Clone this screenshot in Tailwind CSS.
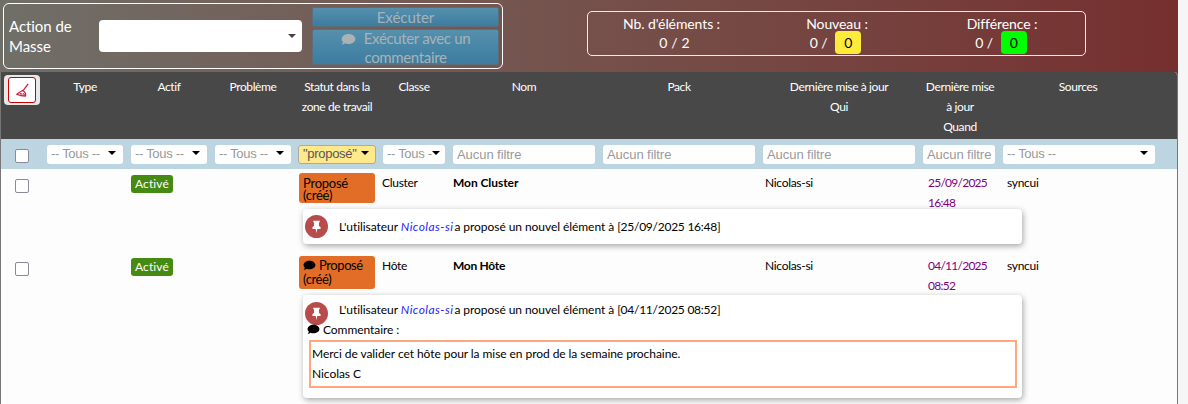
<!DOCTYPE html>
<html lang="fr">
<head>
    <meta charset="UTF-8">
    <title>Zone de travail</title>
    <script src="https://cdn.jsdelivr.net/npm/@tailwindcss/browser@4"></script>
</head>
<body class="bg-[#f6f6f6] h-[404px] w-[1188px] overflow-hidden font-['Lato','Liberation_Sans',sans-serif] text-black text-[12px] tracking-[-0.06px]">
    <div class="w-[1178px] bg-[#752f2f]">
        <!-- top bar -->
        <div class="h-[72px] bg-gradient-to-r from-[#6f6f68] to-[#752f2f] flex items-start">
            <div class="ml-[3px] mt-[3px] w-[500px] h-[66px] border border-white rounded-[6px] flex items-center text-white text-[15px]">
                <div class="w-[95px] pl-[5px] leading-[20px]">Action de Masse</div>
                <div class="w-[203px] h-[32px] bg-white rounded-[4px] flex items-center justify-end pr-[6px]">
                    <span class="border-x-[4px] border-x-transparent border-t-[4px] border-t-[#444]"></span>
                </div>
                <div class="ml-[10px] w-[187px] flex flex-col gap-[2px] text-[#a8b3b6] text-[15px] text-center">
                    <div class="h-[20px] leading-[19px] bg-gradient-to-b from-[#5590ad] to-[#3d7ca0] rounded-[2px] border border-[#5b6e7a]">Exécuter</div>
                    <div class="h-[36px] bg-gradient-to-b from-[#5590ad] to-[#3d7ca0] rounded-[2px] border border-[#5b6e7a] px-[15px]">
                        <div class="-mt-[1px] leading-[19px] tracking-[-0.35px]">
                            <svg viewBox="0 0 24 20" class="inline w-[15px] h-[13px] mr-[8px] -mt-[2px]" fill="#a8b3b6"><path d="M12 1C5.900 1 1 4.600 1 9c0 1.900.9 3.600 2.400 5-.5 1.600-1.500 3-2.400 4 2 0 4.100-.9 5.500-2 1.700.6 3.500 1 5.500 1 6.100 0 11-3.600 11-8s-4.900-8-11-8z"/></svg>Exécuter avec un commentaire
                        </div>
                    </div>
                </div>
            </div>
            <div class="ml-[84px] mt-[11px] w-[499px] h-[45px] border border-white/90 rounded-[5px] grid grid-cols-[167px_164px_166px] text-white text-[14px] text-center leading-[19px] tracking-[-0.1px]">
                <div class="pt-[2px]">
                    <div>Nb. d'éléments :</div>
                    <div class="leading-[23px] -mt-[2px] pl-[6px] tracking-[0.2px]">0 / 2</div>
                </div>
                <div class="pt-[2px]">
                    <div>Nouveau :</div>
                    <div class="flex justify-center items-center gap-[8px] -mt-[2px] pr-[3px]">0 / <span class="w-[26px] h-[23px] leading-[23px] bg-[#ffeb3b] text-black rounded-[4px]">0</span></div>
                </div>
                <div class="pt-[2px]">
                    <div>Différence :</div>
                    <div class="flex justify-center items-center gap-[8px] -mt-[2px] pr-[2px]">0 / <span class="w-[26px] h-[23px] leading-[23px] bg-[#00ff00] text-black rounded-[4px]">0</span></div>
                </div>
            </div>
        </div>

        <!-- table -->
        <div class="border-x border-[#777] rounded-tr-[4px] overflow-hidden bg-[#fdfdfd] h-[332px]">
        <table class="table-fixed w-[1176px] border-collapse">
            <colgroup>
                <col class="w-[42px]"><col class="w-[84px]"><col class="w-[84px]"><col class="w-[84px]"><col class="w-[84px]">
                <col class="w-[70px]"><col class="w-[150px]"><col class="w-[160px]"><col class="w-[160px]"><col class="w-[80px]"><col class="w-[178px]">
            </colgroup>
            <thead>
                <tr class="bg-[#484848] text-white h-[67px] align-top text-center leading-[20px] tracking-[-0.4px]">
                    <th class="font-normal pt-[5px]">
                        <div class="ml-[3px] -mt-[2px] w-[36px] h-[30px] bg-[#e8e8e8] rounded-[4px] flex items-center justify-center">
                            <div class="w-[28px] h-[26px] bg-white border border-[#cc0000] rounded-[3px] flex items-center justify-center">
                                <svg viewBox="0 0 16 16" class="w-[15px] h-[15px]" fill="none" stroke="#d4143c" stroke-width="1.300"><path d="M14 1 8 9M8 8C6 9 4 10 2 12c2 1 6 2 9 2 1-2 0-5-3-6zM5 11l3 1M9 11l1 2"/></svg>
                            </div>
                        </div>
                    </th>
                    <th class="font-normal pt-[5px]">Type</th>
                    <th class="font-normal pt-[5px]">Actif</th>
                    <th class="font-normal pt-[5px]">Problème</th>
                    <th class="font-normal pt-[5px]">Statut dans la zone de travail</th>
                    <th class="font-normal pt-[5px]">Classe</th>
                    <th class="font-normal pt-[5px]">Nom</th>
                    <th class="font-normal pt-[5px]">Pack</th>
                    <th class="font-normal pt-[5px]">Dernière mise à jour<br>Qui</th>
                    <th class="font-normal pt-[5px] pl-[2px]">Dernière mise<br>à jour<br>Quand</th>
                    <th class="font-normal pt-[5px] pr-[20px]">Sources</th>
                </tr>
                <tr class="bg-[#bdd4e1] h-[30px] font-['Liberation_Sans',sans-serif] text-[13px]">
                    <th class="font-normal"><input type="checkbox" class="block ml-[14px] mt-[3px] w-[14px] h-[14px] appearance-none bg-white border border-[#8a8a9a] rounded-[2px]"></th>
                    <th class="font-normal px-[4px]"><div class="flex items-center justify-between h-[19px] bg-white rounded-[3px] px-[4px] text-[#999] tracking-[-0.3px]">-- Tous --<span class="border-x-[4px] border-x-transparent border-t-[4px] border-t-black mr-[3px] -mt-[3px]"></span></div></th>
                    <th class="font-normal px-[4px]"><div class="flex items-center justify-between h-[19px] bg-white rounded-[3px] px-[4px] text-[#999] tracking-[-0.3px]">-- Tous --<span class="border-x-[4px] border-x-transparent border-t-[4px] border-t-black mr-[3px] -mt-[3px]"></span></div></th>
                    <th class="font-normal px-[4px]"><div class="flex items-center justify-between h-[19px] bg-white rounded-[3px] px-[4px] text-[#999] tracking-[-0.3px]">-- Tous --<span class="border-x-[4px] border-x-transparent border-t-[4px] border-t-black mr-[3px] -mt-[3px]"></span></div></th>
                    <th class="font-normal px-[3px]"><div class="flex items-center justify-between h-[19px] bg-[#ffe98a] border border-[#aaa] rounded-[3px] px-[4px] text-[#555] tracking-[-0.3px]">"proposé"<span class="border-x-[4px] border-x-transparent border-t-[4px] border-t-black mr-[2px] -mt-[3px]"></span></div></th>
                    <th class="font-normal px-[4px]"><div class="flex items-center justify-between h-[19px] bg-white rounded-[3px] px-[4px] text-[#999] overflow-hidden whitespace-nowrap tracking-[-0.3px]">-- Tous -<span class="border-x-[4px] border-x-transparent border-t-[4px] border-t-black mr-[3px] -mt-[3px]"></span></div></th>
                    <th class="font-normal px-[4px]"><div class="h-[19px] leading-[19px] bg-white rounded-[3px] px-[4px] text-left text-[#999]">Aucun filtre</div></th>
                    <th class="font-normal px-[4px]"><div class="h-[19px] leading-[19px] bg-white rounded-[3px] px-[4px] text-left text-[#999]">Aucun filtre</div></th>
                    <th class="font-normal px-[4px]"><div class="h-[19px] leading-[19px] bg-white rounded-[3px] px-[4px] text-left text-[#999]">Aucun filtre</div></th>
                    <th class="font-normal px-[4px]"><div class="h-[19px] leading-[19px] bg-white rounded-[3px] px-[4px] text-left text-[#999] whitespace-nowrap overflow-hidden">Aucun filtre</div></th>
                    <th class="font-normal pl-[4px] pr-[22px]"><div class="flex items-center justify-between h-[19px] bg-white rounded-[3px] px-[4px] text-[#999] tracking-[-0.3px]">-- Tous --<span class="border-x-[4px] border-x-transparent border-t-[4px] border-t-black mr-[3px] -mt-[3px]"></span></div></th>
                </tr>
            </thead>
            <tbody>
                <tr class="align-top h-[40px]">
                    <td class="pt-[10px]"><input type="checkbox" class="block ml-[14px] w-[14px] h-[14px] appearance-none bg-white border border-[#8a8a9a] rounded-[2px]"></td>
                    <td></td>
                    <td class="pt-[6px] pl-[4px]"><span class="block w-fit h-[18px] leading-[18px] px-[4px] bg-[#458a13] text-white tracking-[0.1px] rounded-[3px]">Activé</span></td>
                    <td></td>
                    <td class="pt-[4px] pl-[4px]"><div class="w-[76px] h-[30px] pt-[4px] pl-[4px] text-[13px] leading-[12px] tracking-[-0.25px] bg-[#e26d26] rounded-[3px]">Proposé (créé)</div></td>
                    <td class="pt-[5px] pl-[3px] tracking-[-0.3px]">Cluster</td>
                    <td class="pt-[5px] pl-[4px] font-bold">Mon Cluster</td>
                    <td></td>
                    <td class="pt-[5px] pl-[6px] tracking-[-0.3px]">Nicolas-si</td>
                    <td class="pt-[4px] pl-[9px] text-[#800080] tracking-[-0.75px]"><div class="h-[32px] leading-[20px]">25/09/2025<br>16:48</div></td>
                    <td class="pt-[5px] pl-[8px] tracking-[-0.3px]">syncui</td>
                </tr>
                <tr class="h-[44px] align-top">
                    <td colspan="4"></td>
                    <td colspan="7" class="pl-[8px]">
                        <div class="w-[719px] h-[35px] bg-white rounded-[4px] shadow-[1px_2px_6px_rgba(0,0,0,0.35)] flex items-center pl-[2px]">
                            <div class="w-[23px] h-[23px] rounded-full bg-[#b84c4c] flex items-center justify-center">
                                <svg viewBox="0 0 16 16" class="w-[13px] h-[13px]" fill="white"><path d="M4 1h8v1.500l-1 .5v4l2 2v2H9l-1 5-1-5H3V9l2-2V3l-1-.5z"/></svg>
                            </div>
                            <div class="ml-[11px]">L'utilisateur <i class="text-[#1f1fff] tracking-[0.45px] mr-[-2px]">Nicolas-si</i> a proposé un nouvel élément à <span class="tracking-[-0.25px]">[25/09/2025 16:48]</span></div>
                        </div>
                    </td>
                </tr>
                <tr class="align-top h-[42px]">
                    <td class="pt-[9px]"><input type="checkbox" class="block ml-[14px] w-[14px] h-[14px] appearance-none bg-white border border-[#8a8a9a] rounded-[2px]"></td>
                    <td></td>
                    <td class="pt-[5px] pl-[4px]"><span class="block w-fit h-[18px] leading-[18px] px-[4px] bg-[#458a13] text-white tracking-[0.1px] rounded-[3px]">Activé</span></td>
                    <td></td>
                    <td class="pt-[3px] pl-[4px]"><div class="w-[76px] h-[33px] pt-[2px] pl-[4px] text-[13px] leading-[14px] tracking-[-0.4px] bg-[#e26d26] rounded-[3px]"><svg viewBox="0 0 24 20" class="inline w-[13px] h-[11px] -mt-[2px]" fill="black"><path d="M12 1C5.900 1 1 4.600 1 9c0 1.900.9 3.600 2.400 5-.5 1.600-1.500 3-2.400 4 2 0 4.100-.9 5.500-2 1.700.6 3.500 1 5.500 1 6.100 0 11-3.600 11-8s-4.900-8-11-8z"/></svg> Proposé (créé)</div></td>
                    <td class="pt-[4px] pl-[3px] tracking-[-0.3px]">Hôte</td>
                    <td class="pt-[4px] pl-[4px] font-bold tracking-[-0.3px]">Mon Hôte</td>
                    <td></td>
                    <td class="pt-[4px] pl-[6px] tracking-[-0.3px]">Nicolas-si</td>
                    <td class="pt-[3px] pl-[9px] text-[#800080] tracking-[-0.75px]"><div class="h-[32px] leading-[20px]">04/11/2025<br>08:52</div></td>
                    <td class="pt-[4px] pl-[8px] tracking-[-0.3px]">syncui</td>
                </tr>
                <tr class="align-top">
                    <td colspan="4"></td>
                    <td colspan="7" class="pl-[8px]">
                        <div class="w-[719px] h-[103px] bg-white rounded-[4px] shadow-[1px_2px_6px_rgba(0,0,0,0.35)] pl-[2px] pt-[7px]">
                            <div class="flex items-start">
                                <div class="w-[23px] h-[23px] rounded-full bg-[#b84c4c] flex items-center justify-center">
                                    <svg viewBox="0 0 16 16" class="w-[13px] h-[13px]" fill="white"><path d="M4 1h8v1.500l-1 .5v4l2 2v2H9l-1 5-1-5H3V9l2-2V3l-1-.5z"/></svg>
                                </div>
                                <div class="ml-[11px] -mt-[1px]">L'utilisateur <i class="text-[#1f1fff] tracking-[0.45px] mr-[-2px]">Nicolas-si</i> a proposé un nouvel élément à <span class="tracking-[-0.25px]">[04/11/2025 08:52]</span></div>
                            </div>
                            <div class="pl-[2px] -mt-[3px] leading-[16px]"><svg viewBox="0 0 24 20" class="inline w-[13px] h-[11px] -mt-[2px]" fill="black"><path d="M12 1C5.900 1 1 4.600 1 9c0 1.900.9 3.600 2.400 5-.5 1.600-1.500 3-2.400 4 2 0 4.100-.9 5.500-2 1.700.6 3.500 1 5.500 1 6.100 0 11-3.600 11-8s-4.900-8-11-8z"/></svg> Commentaire :</div>
                            <div class="mt-[2px] ml-[4px] w-[708px] h-[48px] border-2 border-[#ffa77f] pl-[1px] pt-[2px] leading-[20px]">
                                Merci de valider cet hôte pour la mise en prod de la semaine prochaine.<br>Nicolas C
                            </div>
                        </div>
                    </td>
                </tr>
            </tbody>
        </table>
        </div>
    </div>
</body>
</html>
